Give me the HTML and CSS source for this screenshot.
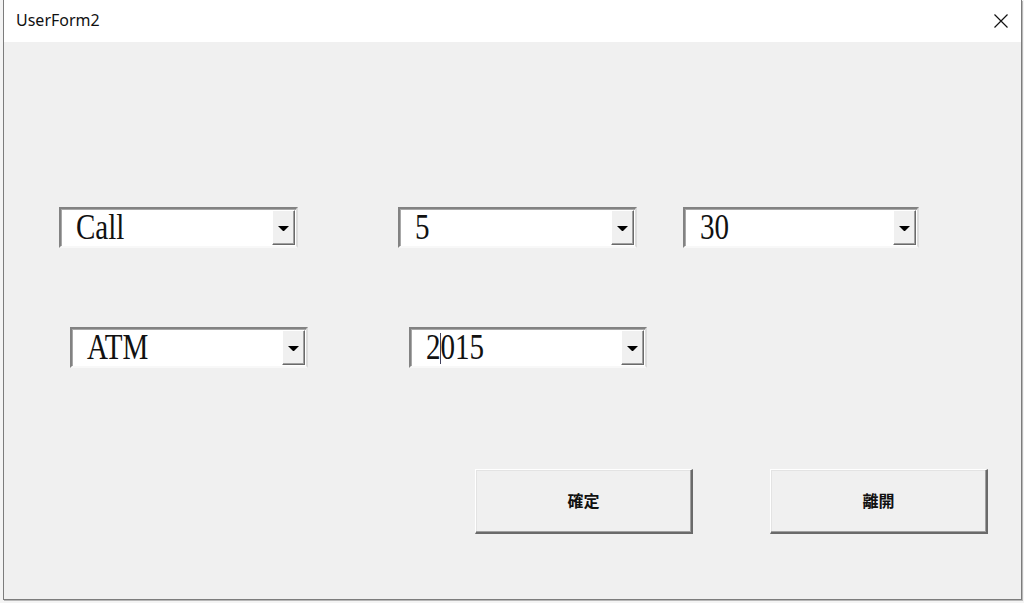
FILE: index.html
```html
<!DOCTYPE html>
<html>
<head>
<meta charset="utf-8">
<link rel="stylesheet" href="styles.css">
</head>
<body>
<div class="window">
  <div class="titlebar">
    <span class="title">UserForm2</span>
    <svg class="close" width="16" height="16" viewBox="0 0 16 16"><path d="M1.5 1.5 L14.5 14.5 M14.5 1.5 L1.5 14.5" stroke="#111" stroke-width="1.2" fill="none"/></svg>
  </div>
  <div class="client">
    <div class="row row1">
      <div class="combo c1"><span class="val">Call</span><span class="drop"><i class="arrow"></i></span></div>
      <div class="combo c2"><span class="val">5</span><span class="drop"><i class="arrow"></i></span></div>
      <div class="combo c3"><span class="val">30</span><span class="drop"><i class="arrow"></i></span></div>
    </div>
    <div class="row row2">
      <div class="combo c4"><span class="val">ATM</span><span class="drop"><i class="arrow"></i></span></div>
      <div class="combo c5"><span class="val">2<span class="caret"></span>015</span><span class="drop"><i class="arrow"></i></span></div>
    </div>
    <div class="row row3">
      <button class="btn b1">確定</button>
      <button class="btn b2">離開</button>
    </div>
  </div>
</div>
</body>
</html>
```

FILE: styles.css
```css
html, body {
  margin: 0;
  padding: 0;
}
body {
  width: 1024px;
  height: 603px;
  background: #f4f4f4;
  font-family: "Noto Sans", "Noto Sans CJK TC", sans-serif;
  overflow: hidden;
}
.window {
  margin-left: 3px;
  width: 1017px;
  height: 599px;
  border: 1px solid #7c7c7c;
  border-top: none;
  display: flex;
  flex-direction: column;
  background: #f0f0f0;
  box-shadow: 1px 1px 0 #b8b8b8;
}
.titlebar {
  height: 42px;
  background: #ffffff;
  display: flex;
  align-items: center;
  justify-content: space-between;
  padding: 0 12px 0 12px;
  flex: none;
}
.title {
  font-size: 16px;
  color: #111;
  margin-top: -2px;
}
.close {
  margin-top: -1px;
}
.client {
  flex: 1;
  display: flex;
  flex-direction: column;
}
.row {
  display: flex;
  align-items: flex-start;
}
.row1 { margin-top: 165px; }
.row2 { margin-top: 79px; }
.row3 { margin-top: 101px; }

.combo {
  box-sizing: border-box;
  height: 41px;
  background: #ffffff;
  border-top: 2px solid #828282;
  border-left: 2px solid #828282;
  border-right: 2px solid #dcdcdc;
  border-bottom: 2px solid #f8f8f8;
  display: flex;
  align-items: stretch;
  box-shadow: inset 1px 1px 0 #a8a8a8;
}
.c1 { margin-left: 55px; width: 239px; }
.c2 { margin-left: 100px; width: 239px; }
.c3 { margin-left: 46px; width: 236px; }
.c4 { margin-left: 66px; width: 238px; }
.c5 { margin-left: 101px; width: 238px; }

.val {
  flex: 1;
  font-family: "Liberation Serif", serif;
  font-size: 35px;
  line-height: 38px;
  color: #111;
  padding-left: 18px;
  transform: scaleX(0.83);
  transform-origin: left center;
  white-space: nowrap;
}
.caret {
  display: inline-block;
  width: 1px;
  height: 31px;
  background: #1a1a3a;
  vertical-align: -5px;
  margin-left: -1px;
}
.drop {
  flex: none;
  width: 23px;
  margin: 1px 1px 1px 0;
  box-sizing: border-box;
  background: #f0f0f0;
  border-top: 1px solid #ffffff;
  border-left: 1px solid #ffffff;
  border-right: 1px solid #6a6a6a;
  border-bottom: 1px solid #6a6a6a;
  box-shadow: inset -1px -1px 0 #a0a0a0;
  display: flex;
  align-items: center;
  justify-content: center;
}
.arrow {
  width: 1px;
  height: 0;
  border-left: 5px solid transparent;
  border-right: 5px solid transparent;
  border-top: 5px solid #000;
  margin-top: 1px;
}

.btn {
  box-sizing: border-box;
  width: 218px;
  height: 65px;
  background: #f0f0f0;
  border-top: 1px solid #ffffff;
  border-left: 1px solid #ffffff;
  border-right: 2px solid #6a6a6a;
  border-bottom: 2px solid #6a6a6a;
  box-shadow: inset -1px -1px 0 #a0a0a0, inset 1px 1px 0 #e3e3e3;
  font-family: "Noto Sans CJK TC", sans-serif;
  font-size: 16px;
  font-weight: 700;
  color: #111;
  padding: 0 0 3px 0;
}
.b1 { margin-left: 471px; }
.b2 { margin-left: 77px; }
```
